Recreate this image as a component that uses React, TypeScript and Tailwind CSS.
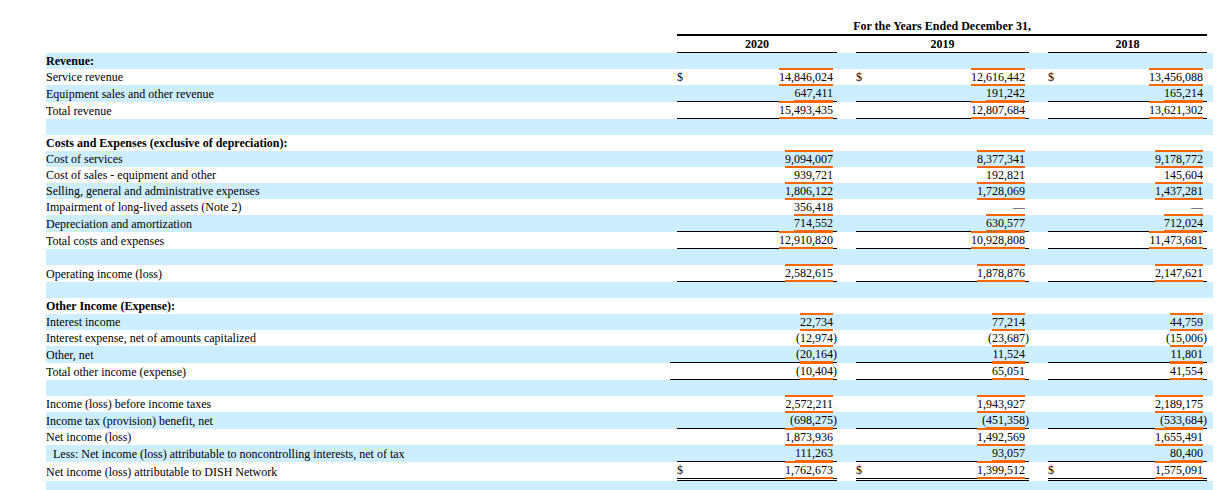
type Row = {
  label?: string
  bold?: boolean
  indent?: boolean
  vals?: [string, string, string]
  dollar?: boolean
  line?: 'single' | 'double'
  wide?: boolean
}

const rows: Row[] = [
  { label: 'Revenue:', bold: true },
  { label: 'Service revenue', vals: ['14,846,024', '12,616,442', '13,456,088'], dollar: true },
  { label: 'Equipment sales and other revenue', vals: ['647,411', '191,242', '165,214'], line: 'single' },
  { label: 'Total revenue', vals: ['15,493,435', '12,807,684', '13,621,302'], line: 'single' },
  {},
  { label: 'Costs and Expenses (exclusive of depreciation):', bold: true },
  { label: 'Cost of services', vals: ['9,094,007', '8,377,341', '9,178,772'] },
  { label: 'Cost of sales - equipment and other', vals: ['939,721', '192,821', '145,604'] },
  { label: 'Selling, general and administrative expenses', vals: ['1,806,122', '1,728,069', '1,437,281'] },
  { label: 'Impairment of long-lived assets (Note 2)', vals: ['356,418', '—', '—'] },
  { label: 'Depreciation and amortization', vals: ['714,552', '630,577', '712,024'], line: 'single' },
  { label: 'Total costs and expenses', vals: ['12,910,820', '10,928,808', '11,473,681'], line: 'single' },
  {},
  { label: 'Operating income (loss)', vals: ['2,582,615', '1,878,876', '2,147,621'], line: 'single' },
  {},
  { label: 'Other Income (Expense):', bold: true },
  { label: 'Interest income', vals: ['22,734', '77,214', '44,759'] },
  { label: 'Interest expense, net of amounts capitalized', vals: ['(12,974)', '(23,687)', '(15,006)'] },
  { label: 'Other, net', vals: ['(20,164)', '11,524', '11,801'], line: 'single', wide: true },
  { label: 'Total other income (expense)', vals: ['(10,404)', '65,051', '41,554'], line: 'single', wide: true },
  {},
  { label: 'Income (loss) before income taxes', vals: ['2,572,211', '1,943,927', '2,189,175'] },
  { label: 'Income tax (provision) benefit, net', vals: ['(698,275)', '(451,358)', '(533,684)'], line: 'single' },
  { label: 'Net income (loss)', vals: ['1,873,936', '1,492,569', '1,655,491'] },
  {
    label: 'Less: Net income (loss) attributable to noncontrolling interests, net of tax',
    indent: true,
    vals: ['111,263', '93,057', '80,400'],
    line: 'single',
  },
  {
    label: 'Net income (loss) attributable to DISH Network',
    vals: ['1,762,673', '1,399,512', '1,575,091'],
    dollar: true,
    line: 'double',
  },
  {},
]

function Amount({ v }: { v: string }) {
  if (v === '—') return <>—</>
  const neg = v.startsWith('(')
  const num = neg ? v.slice(1, -1) : v
  return (
    <>
      {neg && '('}
      <span className="border-y-2 border-[#ff6600]">{num}</span>
    </>
  )
}

function YearCells({ row, i }: { row: Row; i: number }) {
  const v = row.vals?.[i]
  const line =
    row.line === 'double'
      ? 'border-b-[3px] border-double border-black'
      : row.line === 'single'
        ? 'border-b border-black'
        : ''
  return (
    <>
      <td className={`relative p-0 ${line}`}>
        {row.dollar ? '$' : ''}
        {/* a few rows carry the 2020 rule a little further left */}
        {row.wide && i === 0 && <span className="absolute -bottom-px -left-[7px] h-px w-[7px] bg-black" />}
      </td>
      <td className={`p-0 text-right whitespace-nowrap ${line}`}>{v ? <Amount v={v} /> : null}</td>
      <td className={`p-0 ${line}`}>{v?.startsWith('(') ? ')' : ''}</td>
    </>
  )
}

export default function App() {
  return (
    <div className="min-h-[490px] bg-white pt-[18px] font-['Liberation_Serif',serif] text-[12px] leading-4 text-black">
      <table className="ml-[46px] w-[1167px] table-fixed border-separate border-spacing-0">
        <colgroup>
          <col className="w-[631px]" />
          <col className="w-[12px]" />
          <col className="w-[144px]" />
          <col className="w-[4px]" />
          <col className="w-[19px]" />
          <col className="w-[12px]" />
          <col className="w-[157px]" />
          <col className="w-[4px]" />
          <col className="w-[19px]" />
          <col className="w-[12px]" />
          <col className="w-[143px]" />
          <col className="w-[4px]" />
          <col className="w-[6px]" />
        </colgroup>
        <thead>
          <tr className="h-4">
            <td className="p-0" />
            <td colSpan={11} className="border-b-2 border-black p-0 text-center font-bold">
              For the Years Ended December 31,
            </td>
            <td className="p-0" />
          </tr>
          <tr className="h-[15px]">
            <td className="p-0" />
            <td colSpan={3} className="border-b border-black p-0 text-center font-bold">
              2020
            </td>
            <td className="p-0" />
            <td colSpan={3} className="border-b border-black p-0 text-center font-bold">
              2019
            </td>
            <td className="p-0" />
            <td colSpan={3} className="border-b border-black p-0 text-center font-bold">
              2018
            </td>
            <td className="p-0" />
          </tr>
        </thead>
        <tbody>
          {rows.map((row, r) => (
            <tr key={r} className={`h-4 ${r % 2 === 0 ? 'bg-[#cceeff]' : 'bg-white'}`}>
              <td
                className={`p-0 whitespace-nowrap ${row.bold ? 'font-bold' : ''} ${row.indent ? 'pl-[7px]' : ''}`}
              >
                {row.label ?? ''}
              </td>
              <YearCells row={row} i={0} />
              <td className="p-0" />
              <YearCells row={row} i={1} />
              <td className="p-0" />
              <YearCells row={row} i={2} />
              <td className="p-0" />
            </tr>
          ))}
        </tbody>
      </table>
    </div>
  )
}
